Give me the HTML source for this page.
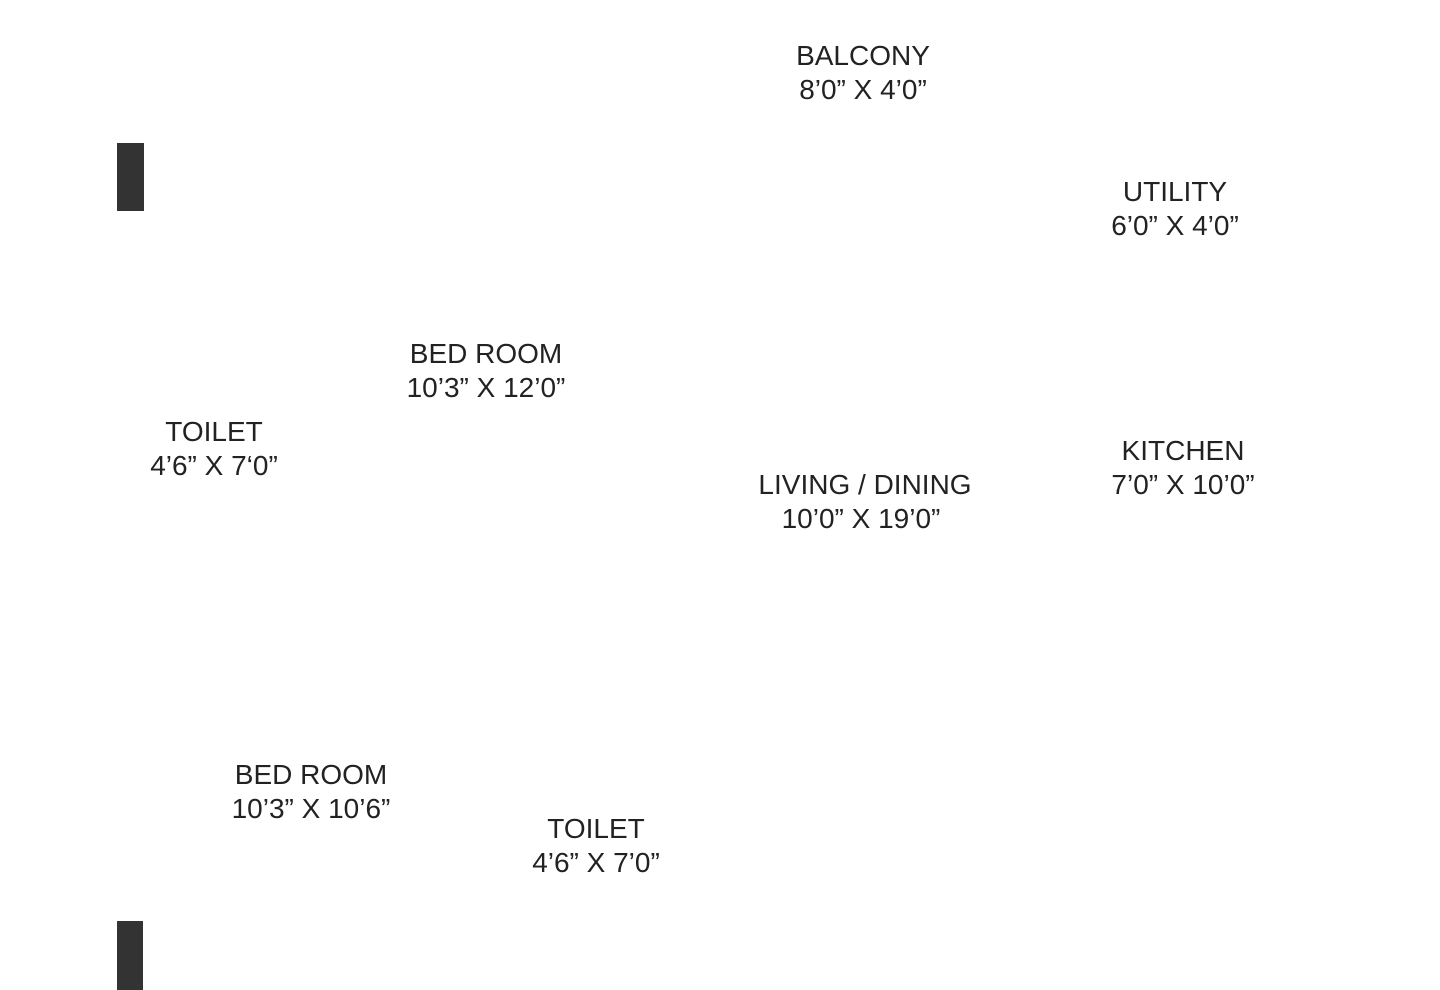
<!DOCTYPE html>
<html><head><meta charset="utf-8"><style>
html,body{margin:0;padding:0;background:#fff;width:1440px;height:990px;overflow:hidden;position:relative}
.l{position:absolute;width:400px;margin-left:-200px;text-align:center;font-family:"Liberation Sans",sans-serif;font-size:28px;line-height:34px;color:#222;white-space:nowrap}
.b{position:absolute;background:#333}
</style></head><body>
<div class="b" style="left:117px;top:143px;width:27px;height:68px"></div>
<div class="b" style="left:117px;top:921px;width:26px;height:69px"></div>
<div class="l" style="left:863px;top:39px">BALCONY<br>8’0” X 4’0”</div>
<div class="l" style="left:1175px;top:175px">UTILITY<br>6’0” X 4’0”</div>
<div class="l" style="left:486px;top:337px">BED ROOM<br>10’3” X 12’0”</div>
<div class="l" style="left:214px;top:415px">TOILET<br>4’6” X 7‘0”</div>
<div class="l" style="left:1183px;top:434px">KITCHEN<br>7’0” X 10’0”</div>
<div class="l" style="left:865px;top:468px">LIVING / DINING<br><span style="position:relative;left:-4px">10’0” X 19’0”</span></div>
<div class="l" style="left:311px;top:758px">BED ROOM<br>10’3” X 10’6”</div>
<div class="l" style="left:596px;top:812px">TOILET<br>4’6” X 7’0”</div>
</body></html>
